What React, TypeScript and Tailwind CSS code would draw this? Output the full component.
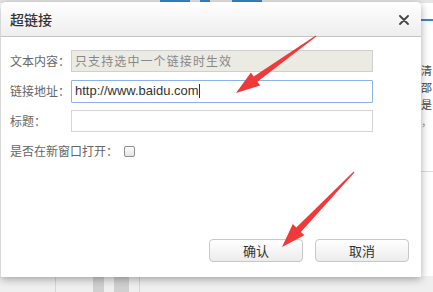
import React from 'react';

const cjk = '"Noto Sans CJK SC", "Liberation Sans", sans-serif';

type Pt = [number, number];

// tapered annotation arrow, tail -> tip
const arrowPoints = (tail: Pt, tip: Pt, headLen = 24, headHalf = 8, neckHalf = 3.2, tailHalf = 0.6) => {
  const dx = tip[0] - tail[0];
  const dy = tip[1] - tail[1];
  const len = Math.hypot(dx, dy);
  const ux = dx / len;
  const uy = dy / len;
  const nx = -uy;
  const ny = ux;
  const bx = tip[0] - ux * headLen;
  const by = tip[1] - uy * headLen;
  const p = (x: number, y: number) => `${x.toFixed(1)},${y.toFixed(1)}`;
  return [
    p(tail[0] + nx * tailHalf, tail[1] + ny * tailHalf),
    p(bx + nx * neckHalf, by + ny * neckHalf),
    p(bx + nx * headHalf, by + ny * headHalf),
    p(tip[0], tip[1]),
    p(bx - nx * headHalf, by - ny * headHalf),
    p(bx - nx * neckHalf, by - ny * neckHalf),
    p(tail[0] - nx * tailHalf, tail[1] - ny * tailHalf),
  ].join(' ');
};

const Field: React.FC<{ label: string; children: React.ReactNode }> = ({ label, children }) => (
  <div className="flex items-center h-[22px]">
    <span className="w-[61px] text-[12px] text-[#666] whitespace-nowrap" style={{ fontFamily: cjk }}>{label}</span>
    {children}
  </div>
);

const App: React.FC = () => {
  return (
    <div className="relative w-[433px] h-[292px] overflow-hidden bg-[#f7f7f7]">
      {/* page behind the dialog */}
      <div className="absolute inset-0 flex flex-col">
        <div className="h-[3px] bg-[#e6e6e6] flex">
          <div className="ml-[160px] w-[30px] bg-[#3a86c8]" />
          <div className="ml-[10px] w-[10px] bg-[#3a86c8]" />
          <div className="ml-[22px] w-[30px] bg-[#3a86c8]" />
        </div>
        <div className="flex-1 bg-white" />
        <div className="h-[16px] bg-[#efefef] flex">
          <div className="ml-[55px] w-px bg-[#d6d6d6]" />
          <div className="ml-[37px] w-[11px] bg-[#d0d0d0]" />
          <div className="ml-[10px] w-[15px] bg-[#d0d0d0]" />
          <div className="ml-[10px] w-px bg-[#d6d6d6]" />
        </div>
      </div>
      <div className="absolute left-[421px] top-[19px] w-[12px] h-[2px] bg-[#3a86c8]" />
      <div className="absolute left-[421px] top-[62px] flex flex-col gap-[1px] text-[11px] leading-[16px] text-[#444]" style={{ fontFamily: cjk }}>
        <span>清</span>
        <span>邵</span>
        <span>是</span>
        <span className="text-[#999]">，</span>
      </div>
      <div className="absolute left-[421px] top-[171px] w-[12px] h-px bg-[#ddd]" />

      {/* dialog */}
      <div className="absolute left-[1px] top-[2px] w-[420px] h-[275px] bg-white rounded-t-[5px] shadow-[0_2px_8px_rgba(0,0,0,0.35)] flex flex-col">
        <div className="h-[35px] shrink-0 flex items-center justify-between pl-[9px] pr-[12px] rounded-t-[5px] bg-gradient-to-b from-white to-[#eeeeee] border-b border-[#c4c4c4]">
          <span className="text-[14px] text-[#333] font-medium" style={{ fontFamily: cjk }}>超链接</span>
          <svg width="10" height="10" viewBox="0 0 10 10" className="mt-[1px]">
            <path d="M1 1 L9 9 M9 1 L1 9" stroke="#444" strokeWidth="1.8" strokeLinecap="round" />
          </svg>
        </div>
        <div className="flex-1 flex flex-col pl-[9px] pr-[12px] pt-[13px] pb-[15px]">
          <div className="flex flex-col gap-[8px]">
            <Field label="文本内容：">
              <div className="w-[302px] h-[22px] bg-[#ebebe4] border border-[#d0d0d0] flex items-center pl-[3px] text-[12px] tracking-[1.1px] text-[#888]" style={{ fontFamily: cjk }}>
                只支持选中一个链接时生效
              </div>
            </Field>
            <Field label="链接地址：">
              <div className="w-[302px] h-[23px] bg-white border border-[#8db2ea] rounded-[1px] flex items-center pl-[3px] text-[13px] text-[#333]" style={{ fontFamily: '"Liberation Sans", Arial, sans-serif' }}>
                http://www.baidu.com<span className="w-px h-[14px] bg-[#333]" />
              </div>
            </Field>
            <Field label="标题：">
              <div className="w-[302px] h-[22px] bg-white border border-[#d4d4d4]" />
            </Field>
            <div className="flex items-center h-[22px]">
              <span className="text-[12px] text-[#666] whitespace-nowrap" style={{ fontFamily: cjk }}>是否在新窗口打开：</span>
              <div className="ml-[6px] w-[11px] h-[11px] rounded-[2px] border border-[#8f8f8f] bg-gradient-to-b from-[#fdfdfd] to-[#e4e4e4]" />
            </div>
          </div>
          <div className="mt-auto flex justify-end gap-[12px]">
            {['确认', '取消'].map((t) => (
              <button
                key={t}
                className="w-[94px] h-[23px] rounded-[4px] border border-[#c8c8c8] bg-gradient-to-b from-white to-[#ececec] text-[13px] text-[#333]"
                style={{ fontFamily: cjk }}
              >
                {t}
              </button>
            ))}
          </div>
        </div>
      </div>

      {/* annotation arrows */}
      <svg className="absolute inset-0 pointer-events-none" width="433" height="292">
        <polygon points={arrowPoints([316, 36], [236, 93])} fill="#f03a3a" />
        <polygon points={arrowPoints([354, 172], [282, 247])} fill="#f03a3a" />
      </svg>
    </div>
  );
};

export default App;
